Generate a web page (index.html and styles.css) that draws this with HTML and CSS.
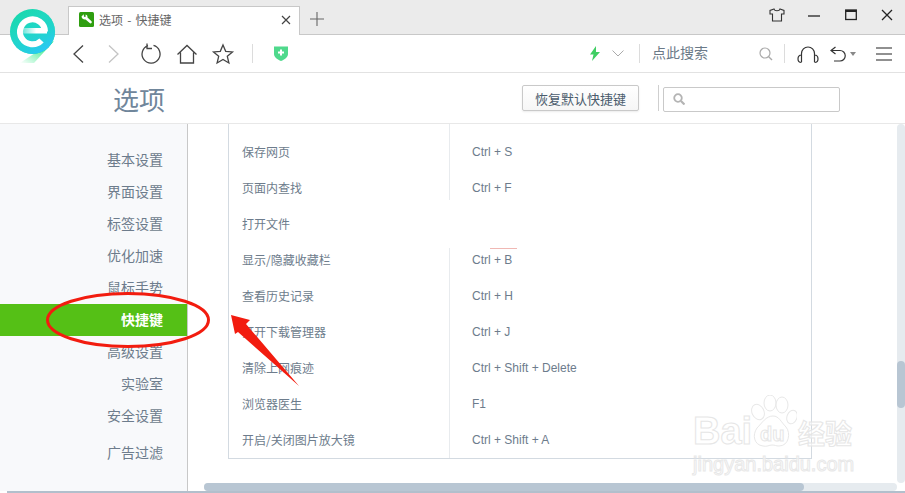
FILE: index.html
```html
<!DOCTYPE html>
<html lang="zh-CN">
<head>
    <meta charset="UTF-8">
    <title>选项 - 快捷键</title>
    <link rel="stylesheet" href="styles.css">
</head>
<body>

    <div class="tabbar">
        <div class="tab">
            <svg class="favicon" width="15" height="15" viewBox="0 0 15 15">
                <rect width="15" height="15" rx="1.5" fill="#2f9e10"/>
                <path d="M2.500 4.500L4.700 2.300 5 4.800l1.500.2.200-2.500c1.300.3 2 1.500 1.800 3l4 3.800c1 1.200-.6 2.800-1.800 1.800L6.600 7.500c-2 .4-3.800-.8-4.100-3z" fill="#fff"/>
            </svg>
            <span class="tab-title">选项 - 快捷键</span>
            <svg class="tab-close" width="10" height="10" viewBox="0 0 10 10">
                <path d="M1 1l8 8M9 1l-8 8" stroke="#444" stroke-width="1.2" fill="none"/>
            </svg>
        </div>
        <svg class="tab-new" width="14" height="14" viewBox="0 0 14 14">
            <path d="M7 0v14M0 7h14" stroke="#666" stroke-width="1.1" fill="none"/>
        </svg>
        <div class="window-btns">
            <svg width="16" height="14" viewBox="0 0 16 14">
                <path d="M5 1L1 2.500v3.500h2.500V13h9V6H15V2.500L11 1c-.5 2.400-5.500 2.400-6 0z" stroke="#333" stroke-width="1.100" fill="none"/>
            </svg>
            <svg width="14" height="14" viewBox="0 0 14 14">
                <path d="M1 8h12" stroke="#222" stroke-width="1.300" fill="none"/>
            </svg>
            <svg width="14" height="14" viewBox="0 0 14 14">
                <rect x="1.700" y="2" width="10.600" height="9.500" stroke="#222" stroke-width="1.300" fill="none"/>
                <path d="M1.700 3h10.600" stroke="#222" stroke-width="2" fill="none"/>
            </svg>
            <svg width="14" height="14" viewBox="0 0 14 14">
                <path d="M2 2l10 10M12 2L2 12" stroke="#222" stroke-width="1.300" fill="none"/>
            </svg>
        </div>
    </div>

    <div class="toolbar">
        <div class="nav-btn">
            <svg width="24" height="24" viewBox="0 0 24 24"><path d="M16 3.500L7 12l9 8.500" stroke="#444" stroke-width="1.300" fill="none"/></svg>
        </div>
        <div class="nav-btn">
            <svg width="24" height="24" viewBox="0 0 24 24"><path d="M6 3.500l9 8.500-9 8.500" stroke="#c4c4c4" stroke-width="1.300" fill="none"/></svg>
        </div>
        <div class="nav-btn">
            <svg width="24" height="24" viewBox="0 0 24 24"><path d="M14.500 3.400a9 9 0 1 1-5.500.2M8 1.500v5h5" stroke="#444" stroke-width="1.300" fill="none"/></svg>
        </div>
        <div class="nav-btn">
            <svg width="24" height="24" viewBox="0 0 24 24"><path d="M2.500 12.500L12 3.500l9.500 9M5.500 10.500V21h13V10.500" stroke="#444" stroke-width="1.300" fill="none"/></svg>
        </div>
        <div class="nav-btn">
            <svg width="24" height="24" viewBox="0 0 24 24"><path d="M12 3l2.700 6.300 6.800.6-5.200 4.400 1.600 6.700-5.900-3.600-5.900 3.600 1.600-6.700L2.500 9.900l6.800-.6z" stroke="#444" stroke-width="1.300" fill="none"/></svg>
        </div>
        <div class="tool-sep sep-left"></div>
        <svg class="shield" width="14" height="16" viewBox="0 0 14 16">
            <path d="M0 1.500h14V9c0 3.500-3.500 5.500-7 7-3.500-1.500-7-3.500-7-7z" fill="#4fd98c"/>
            <path d="M7 4.500v6M4 7.500h6" stroke="#fff" stroke-width="2" fill="none"/>
        </svg>

        <div class="tool-right">
            <svg width="10" height="15" viewBox="0 0 10 15"><path d="M6 0L0 8.500h3.500L2 15l8-9H6z" fill="#3fce63"/></svg>
            <svg class="chevron" width="12" height="7" viewBox="0 0 12 7"><path d="M.5.500L6 6l5.500-5.500" stroke="#aaa" stroke-width="1" fill="none"/></svg>
            <div class="tool-sep sep-search"></div>
            <span class="search-hint">点此搜索</span>
            <svg class="search-glass" width="14" height="14" viewBox="0 0 14 14">
                <circle cx="6" cy="6" r="5" stroke="#aaa" stroke-width="1.200" fill="none"/>
                <path d="M9.700 9.700L13 13" stroke="#aaa" stroke-width="1.400" fill="none"/>
            </svg>
            <div class="tool-sep sep-tools"></div>
            <svg class="headset" width="22" height="20" viewBox="0 0 22 20">
                <path d="M4.500 18V9.500a6.500 6.500 0 0 1 13 0V18M4.500 11C2 11 1 13 1 15s1 3.500 3.500 3.500M17.500 11c2.500 0 3.500 2 3.500 4s-1 3.500-3.500 3.500" stroke="#333" stroke-width="1.200" fill="none"/>
            </svg>
            <svg class="undo" width="16" height="16" viewBox="0 0 16 16">
                <path d="M5.500 1L1 4.500 5.500 8M1 4.500h9a5 5 0 0 1 0 10.500H4" stroke="#333" stroke-width="1.200" fill="none"/>
            </svg>
            <svg class="caret" width="6" height="4" viewBox="0 0 6 4"><path d="M0 0h6L3 4z" fill="#888"/></svg>
            <svg class="menu" width="16" height="14" viewBox="0 0 16 14">
                <path d="M0 1h16M0 7h16M0 13h16" stroke="#222" stroke-width="1.200" fill="none"/>
            </svg>
        </div>
    </div>

    <div class="header">
        <h1>选项</h1>
        <button class="reset-btn">恢复默认快捷键</button>
        <div class="header-sep"></div>
        <div class="search-box">
            <svg width="12" height="12" viewBox="0 0 12 12">
                <circle cx="5" cy="5" r="3.800" stroke="#b4b4b4" stroke-width="1.800" fill="none"/>
                <path d="M8 8l3.500 3.500" stroke="#b4b4b4" stroke-width="2.200" fill="none"/>
            </svg>
        </div>
    </div>

    <div class="main">
        <ul class="sidebar">
            <li>基本设置</li>
            <li>界面设置</li>
            <li>标签设置</li>
            <li>优化加速</li>
            <li>鼠标手势</li>
            <li class="active">快捷键</li>
            <li>高级设置</li>
            <li>实验室</li>
            <li>安全设置</li>
            <li class="adblock">广告过滤</li>
        </ul>

        <div class="content">
            <div class="content-top">
                <div class="panel">
                    <div class="shortcuts">
                        <div class="row"><div class="action">保存网页</div><div class="keys">Ctrl + S</div></div>
                        <div class="row"><div class="action">页面内查找</div><div class="keys">Ctrl + F</div></div>
                        <div class="row blank"><div class="action">打开文件</div><div class="keys"></div></div>
                        <div class="row"><div class="action">显示/隐藏收藏栏</div><div class="keys">Ctrl + B</div></div>
                        <div class="row"><div class="action">查看历史记录</div><div class="keys">Ctrl + H</div></div>
                        <div class="row"><div class="action">打开下载管理器</div><div class="keys">Ctrl + J</div></div>
                        <div class="row"><div class="action">清除上网痕迹</div><div class="keys">Ctrl + Shift + Delete</div></div>
                        <div class="row"><div class="action">浏览器医生</div><div class="keys">F1</div></div>
                        <div class="row"><div class="action">开启/关闭图片放大镜</div><div class="keys">Ctrl + Shift + A</div></div>
                    </div>
                </div>
                <div class="vscroll"><div class="vthumb"></div></div>
            </div>
            <div class="hscroll"><div class="hthumb"></div></div>
        </div>
    </div>
    <div class="bottom-line"></div>

    <!-- logo over the tab strip -->
    <svg class="logo" width="50" height="58" viewBox="0 0 50 58">
        <defs>
            <linearGradient id="ringGrad" x1="0" y1="0" x2="1" y2="1">
                <stop offset="0" stop-color="#17d4a8"/>
                <stop offset="0.45" stop-color="#1adcb0"/>
                <stop offset="1" stop-color="#00e56a"/>
            </linearGradient>
            <linearGradient id="blueGrad" x1="0" y1="0" x2="0.6" y2="1">
                <stop offset="0" stop-color="#1fdcc0" stop-opacity="0"/>
                <stop offset="1" stop-color="#2ac8f5"/>
            </linearGradient>
            <linearGradient id="tailGrad" x1="1" y1="0" x2="0" y2="1">
                <stop offset="0" stop-color="#00e56a"/>
                <stop offset="1" stop-color="#00e56a" stop-opacity="0"/>
            </linearGradient>
            <linearGradient id="barGrad" x1="0" y1="0" x2="1" y2="0">
                <stop offset="0" stop-color="#fff" stop-opacity="0.2"/>
                <stop offset="0.6" stop-color="#fff"/>
            </linearGradient>
        </defs>
        <path d="M36 40L12 56h14l20-22z" fill="url(#tailGrad)"/>
        <circle cx="24.500" cy="24.500" r="22.500" fill="url(#ringGrad)"/>
        <circle cx="24.500" cy="24.500" r="22.500" fill="url(#blueGrad)"/>
        <path d="M37 24.500A12.500 12.500 0 1 0 33.500 33.500" stroke="#fff" stroke-width="6" fill="none"/>
        <rect x="12" y="21" width="27" height="5.500" fill="url(#barGrad)"/>
    </svg>

    <!-- red marks drawn on top of the screenshot -->
    <svg class="marks" width="905" height="493" viewBox="0 0 905 493">
        <ellipse cx="128" cy="320" rx="80.500" ry="26.500" stroke="#f21c0f" stroke-width="3" fill="none"/>
        <polygon points="231,315 250,320 246,324 299,386 238,332 235,334" fill="#f21c0f"/>
    </svg>

    <!-- watermark -->
    <div class="watermark">
        <div class="wm-top">
            <span class="wm-bai">Bai</span>
            <svg class="wm-paw" width="48" height="54" viewBox="0 0 48 54">
                <g stroke="#e8e8e8" stroke-width="1" fill="rgba(255,255,255,0.6)">
                    <ellipse cx="9" cy="17" rx="6" ry="8" transform="rotate(-25 9 17)"/>
                    <ellipse cx="21" cy="8" rx="6" ry="8"/>
                    <ellipse cx="33" cy="10" rx="6" ry="8"/>
                    <ellipse cx="43" cy="22" rx="5" ry="7" transform="rotate(20 43 22)"/>
                    <path d="M24 21c6 0 8 6 13 11 5 6 3 19-7 19-3 0-4-1-7-1s-5 2-9 1C5 50 3 40 8 33c5-5 9-12 16-12z"/>
                </g>
            </svg>
            <span class="wm-du">du</span>
            <span class="wm-jy">经验</span>
        </div>
        <div class="wm-url">jingyan.baidu.com</div>
    </div>

</body>
</html>
```

FILE: styles.css
```css
* {
    box-sizing: border-box;
}
html, body {
    margin: 0;
    height: 493px;
    overflow: hidden;
}
body {
    position: relative;
    font-family: "Noto Sans CJK SC", "Liberation Sans", sans-serif;
    color: #6d7c8c;
    background-color: white;
    display: flex;
    flex-direction: column;
}

/* tab strip */
.tabbar {
    height: 35px;
    flex: none;
    display: flex;
    align-items: flex-end;
    padding-left: 68px;
    background-color: #ebebeb;
    border-bottom: 1px solid #c8c8c8;
}
.tab {
    width: 232px;
    height: 29px;
    margin-bottom: -1px;
    display: flex;
    align-items: center;
    padding: 0 8px 3px 10px;
    background-color: white;
    border: 1px solid #c8c8c8;
    border-bottom: none;
}
.favicon {
    margin-right: 5px;
}
.tab-title {
    flex: 1;
    font-size: 12px;
    word-spacing: 1.5px;
    color: #666;
}
.tab-new {
    margin: 0 0 8px 10px;
}
.window-btns {
    margin-left: auto;
    width: 136px;
    height: 34px;
    display: flex;
    align-items: center;
    justify-content: space-between;
    padding: 0 11px 4px 0;
}

/* address bar row */
.toolbar {
    height: 38px;
    flex: none;
    display: flex;
    align-items: center;
    padding-left: 61px;
    border-bottom: 1px solid #e2e2e2;
}
.nav-btn {
    width: 36px;
    height: 24px;
    display: flex;
    justify-content: center;
}
.tool-sep {
    width: 1px;
    height: 19px;
    background-color: #dcdcdc;
}
.sep-left {
    margin-left: 11px;
}
.shield {
    margin: 0 0 2px 21px;
}
.tool-right {
    margin-left: auto;
    display: flex;
    align-items: center;
    padding-right: 13px;
}
.chevron {
    margin-left: 12px;
}
.sep-search {
    margin-left: 15px;
}
.search-hint {
    margin: 0 0 3px 12px;
    font-size: 14px;
    color: #6b7a88;
}
.search-glass {
    margin-left: 51px;
}
.sep-tools {
    margin-left: 11px;
}
.headset {
    margin-left: 12px;
}
.undo {
    margin-left: 11px;
}
.caret {
    margin-left: 4px;
}
.menu {
    margin-left: 20px;
}

/* title row */
.header {
    height: 51px;
    flex: none;
    display: flex;
    align-items: center;
    padding-left: 113px;
    border-bottom: 1px solid #e8e8e8;
}
h1 {
    margin: 0;
    width: 409px;
    font-size: 26px;
    font-weight: normal;
    color: #70869b;
}
.reset-btn {
    width: 117px;
    height: 26px;
    padding: 0;
    font-family: inherit;
    font-size: 13px;
    color: #4b5c6d;
    background: linear-gradient(#ffffff, #f6f6f6);
    border: 1px solid #c9c9c9;
    border-radius: 2px;
    box-shadow: 0 1px 2px rgba(0, 0, 0, 0.08);
}
.header-sep {
    width: 1px;
    height: 26px;
    margin-left: 19px;
    background-color: #cfcfcf;
}
.search-box {
    width: 177px;
    height: 25px;
    margin: 2px 0 0 4px;
    display: flex;
    align-items: center;
    padding-left: 9px;
    border: 1px solid #c9c9c9;
    border-radius: 2px;
}

/* settings body */
.main {
    flex: 1;
    min-height: 0;
    display: flex;
}
.sidebar {
    width: 188px;
    flex: none;
    margin: 0;
    padding: 20px 0 0;
    list-style: none;
    background-color: #f8f9fb;
    border-right: 1px solid #c8c8c8;
}
.sidebar li {
    height: 32px;
    line-height: 30px;
    padding-right: 24px;
    text-align: right;
    font-size: 14px;
}
.sidebar li.active {
    color: white;
    font-weight: bold;
    background-color: #55c016;
}
.sidebar li.adblock {
    margin-top: 5px;
}
.content {
    flex: 1;
    min-width: 0;
    display: flex;
    flex-direction: column;
}
.content-top {
    flex: 1;
    min-height: 0;
    display: flex;
}
.panel {
    flex: 1;
    padding-left: 40px;
}
.shortcuts {
    width: 584px;
    padding-top: 10px;
    border-left: 1px solid #d3dae1;
    border-right: 1px solid #d3dae1;
    border-bottom: 1px solid #d3dae1;
}
.row {
    display: grid;
    grid-template-columns: 220px 1fr;
    height: 36px;
    line-height: 36px;
    font-size: 12px;
}
.row:first-child .keys::before {
    content: "";
    position: absolute;
    left: -1px;
    top: -10px;
    width: 1px;
    height: 10px;
    background-color: #e8ebee;
}
.action {
    padding-left: 13px;
}
.keys {
    position: relative;
    padding-left: 22px;
    border-left: 1px solid #e8ebee;
    font-family: "Liberation Sans", sans-serif;
}
.row.blank .keys::before {
    content: "";
    position: absolute;
    z-index: 1;
    left: -1px;
    top: -6px;
    bottom: -6px;
    width: 1px;
    background-color: white;
}
.row.blank .keys::after {
    content: "";
    position: absolute;
    left: 40px;
    bottom: -7px;
    width: 27px;
    height: 1px;
    background-color: #f0b8b4;
}
.vscroll {
    width: 8px;
    flex: none;
    background-color: #e6ebef;
    border-radius: 4px;
}
.vthumb {
    height: 47px;
    margin-top: 237px;
    background-color: #b8c6d3;
    border-radius: 4px;
}
.hscroll {
    height: 8px;
    flex: none;
    margin: 0 8px 0 16px;
    background-color: #e6ebef;
    border-radius: 4px;
}
.hthumb {
    width: 600px;
    height: 8px;
    background-color: #b8c6d3;
    border-radius: 4px;
}
.bottom-line {
    height: 2px;
    flex: none;
    margin-left: 7px;
    background-color: #b2bfcc;
}

/* things lying over the page */
.logo {
    position: absolute;
    left: 8px;
    top: 7px;
}
.marks {
    position: absolute;
    left: 0;
    top: 0;
    pointer-events: none;
}
.watermark {
    position: absolute;
    left: 693px;
    top: 395px;
    width: 170px;
    pointer-events: none;
}
.wm-top {
    position: relative;
    height: 56px;
}
.wm-bai, .wm-du, .wm-jy {
    position: absolute;
    font-family: "Liberation Sans", sans-serif;
    font-weight: bold;
    color: rgba(255, 255, 255, 0.6);
    -webkit-text-stroke: 1px #e6e6e6;
}
.wm-bai {
    left: 0;
    top: 14px;
    font-size: 38px;
    line-height: 44px;
}
.wm-paw {
    position: absolute;
    left: 56px;
    top: 0;
}
.wm-du {
    left: 67px;
    top: 27px;
    font-size: 20px;
    line-height: 24px;
}
.wm-jy {
    left: 105px;
    top: 20px;
    font-size: 27px;
    line-height: 36px;
    font-family: "Noto Sans CJK SC", sans-serif;
}
.wm-url {
    font-family: "Liberation Sans", sans-serif;
    font-size: 20px;
    line-height: 24px;
    margin-top: 1px;
    color: rgba(255, 255, 255, 0.6);
    -webkit-text-stroke: 1px #e8e8e8;
}
```
